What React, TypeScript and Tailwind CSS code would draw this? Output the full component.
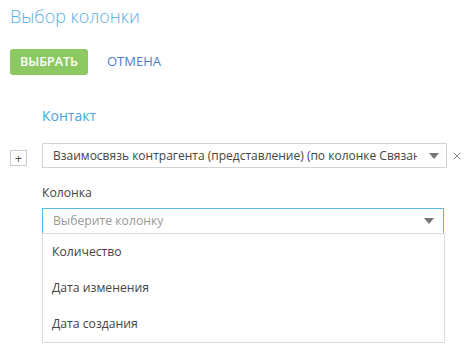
import { X } from 'lucide-react';

const Caret = () => (
  <svg width="10" height="6" viewBox="0 0 10 6" className="shrink-0">
    <path d="M0 0 H10 L5 6 Z" fill="#777" />
  </svg>
);

const columns = ['Количество', 'Дата изменения', 'Дата создания'];

export default function App() {
  return (
    <div className="w-[467px] h-[352px] bg-white overflow-hidden font-['Open_Sans',sans-serif] text-[#444]">
      <div className="pl-[10px] pt-[3px] text-[18px] leading-[26px] font-light text-[#5cb0e0]">
        Выбор колонки
      </div>

      <div className="flex items-center mt-[20px] pl-[10px]">
        <button className="h-[26px] w-[78px] rounded-[3px] bg-[#8dc963] text-white text-[12.5px] font-semibold">
          ВЫБРАТЬ
        </button>
        <button className="ml-[19px] text-[13px] text-[#4a7fd6]">ОТМЕНА</button>
      </div>

      <div className="mt-[31px] pl-[42px] text-[14px] leading-[20px] text-[#4aa3dc]">Контакт</div>

      <div className="flex items-start mt-[17px] pl-[10px]">
        <div className="mt-[7px] w-[17px] h-[16px] border border-[#ccc] flex items-center justify-center text-[13px] leading-none text-[#555]">
          +
        </div>
        <div className="ml-[15px] w-[405px] h-[25px] border border-[#d3d3d3] flex items-center pl-[10px] pr-[7px]">
          <span className="flex-1 overflow-hidden whitespace-nowrap text-[12px] text-[#444]">
            Взаимосвязь контрагента (представление) (по колонке Связанный контакт)
          </span>
          <span className="ml-[12px]">
            <Caret />
          </span>
        </div>
        <X size={12} strokeWidth={1.5} className="ml-[4px] mt-[7px] text-[#666]" />
      </div>

      <div className="mt-[16px] pl-[42px] text-[12.2px] leading-[18px]">Колонка</div>

      <div className="mt-[6px] ml-[42px] w-[402px] h-[26px] border border-[#5eb5e8] flex items-center pl-[10px] pr-[9px]">
        <span className="flex-1 text-[12.2px] text-[#999]">Выберите колонку</span>
        <Caret />
      </div>

      <div className="-mt-[1px] ml-[42px] w-[403px] border border-[#ddd] bg-white">
        {columns.map((c) => (
          <div key={c} className="h-[36px] flex items-center pl-[9px] text-[12.2px] text-[#444]">
            {c}
          </div>
        ))}
      </div>
    </div>
  );
}
